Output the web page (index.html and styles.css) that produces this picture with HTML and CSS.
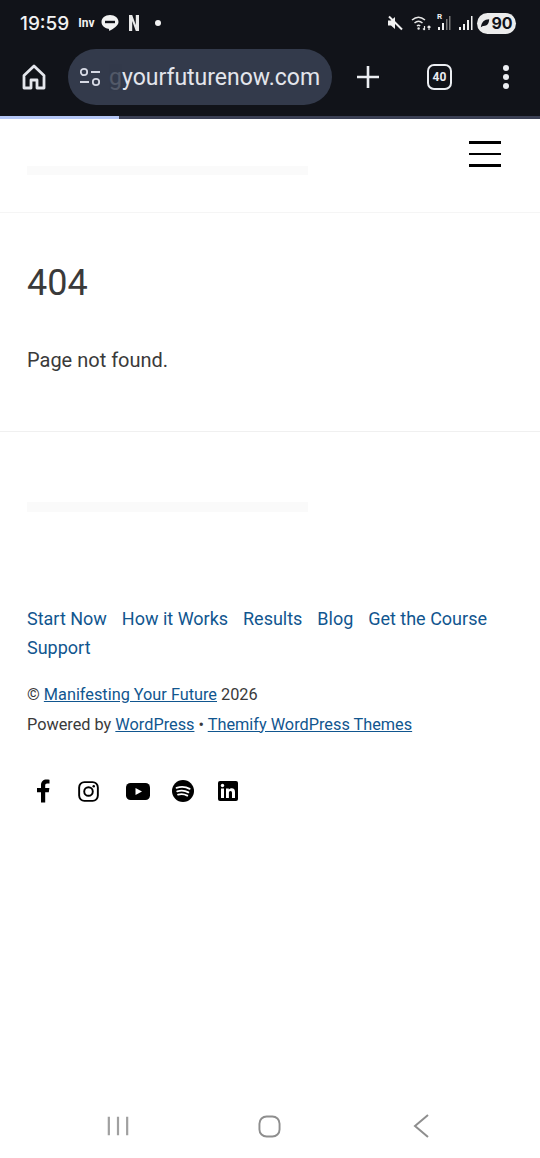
FILE: index.html
```html
<!DOCTYPE html>
<html lang="en">
<head>
  <meta charset="UTF-8">
  <meta name="viewport" content="width=device-width, initial-scale=1.0">
  <title>Page not found</title>
  <link rel="stylesheet" href="styles.css">
</head>
<body>
  <div class="phone">
    <!-- status bar -->
    <div class="status">
      <div class="status-left">
        <span class="clock">19:59</span>
        <span class="inv">Inv</span>
        <svg class="line-icon" viewBox="0 0 20 19"><path d="M10 1C5 1 1.500 4 1.500 8c0 3.500 3 6.300 7 6.800.6.100.6.500.5 1.200-.1.700.2 1 1 .6 2.500-1.300 8.500-4.800 8.500-8.600C18.500 4 15 1 10 1z" fill="#f2f2f2"/><rect x="5" y="6.800" width="10" height="2.400" fill="#111319"/></svg>
        <svg class="netflix-icon" viewBox="0 0 10 16"><path d="M0 0h3.200l3.600 10V0H10v16H6.800L3.200 6v10H0z" fill="#e8e8e8"/></svg>
        <span class="dot"></span>
      </div>
      <div class="status-right">
        <svg class="mute-icon" viewBox="0 0 16 16"><path d="M1 5.500h3L8 2v12L4 10.500H1z" fill="#f2f2f2"/><path d="M2 1.500l13 13" stroke="#f2f2f2" stroke-width="2"/></svg>
        <svg class="wifi-icon" viewBox="0 0 22 16"><path d="M1 5c4-3.500 9-3.500 13 0M3.500 8c2.500-2.200 5.500-2.200 8 0M6 11c1-.9 2.200-.9 3.200 0" fill="none" stroke="#e8e8e8" stroke-width="1.500"/><circle cx="7.600" cy="13.500" r="1.200" fill="#e8e8e8"/><path d="M13.500 11v4M12 13.500l1.500 1.500M18 15v-4M16.500 12.500L18 11l1.500 1.500" fill="none" stroke="#e8e8e8" stroke-width="1.200"/></svg>
        <span class="signal-r">
          <span class="r-label">R</span>
          <svg class="signal-icon" viewBox="0 0 14 16"><rect x="1" y="12" width="2" height="3" fill="#f0f0f0"/><rect x="5" y="8" width="2" height="7" fill="#f0f0f0"/><rect x="9" y="4" width="1.500" height="11" fill="#777"/><rect x="12" y="1" width="1.500" height="14" fill="#777"/></svg>
        </span>
        <svg class="signal-icon" viewBox="0 0 14 16"><rect x="0" y="12" width="2" height="3" fill="#f0f0f0"/><rect x="4" y="9" width="2" height="6" fill="#f0f0f0"/><rect x="8" y="5" width="2" height="10" fill="#f0f0f0"/><rect x="12" y="1" width="1.500" height="14" fill="#f0f0f0"/></svg>
        <span class="battery">
          <svg class="leaf-icon" viewBox="0 0 12 12"><path d="M1 11C2 5 5 1.500 11 1.500 11 7 8 10 3.500 9.500z" fill="#111319"/></svg>
          <span>90</span>
        </span>
      </div>
    </div>

    <!-- browser toolbar -->
    <div class="toolbar">
      <svg class="home-icon" viewBox="0 0 24 26"><path d="M2 11.500L12 2l10 9.500V24h-7v-8H9v8H2z" fill="none" stroke="#e4e6ec" stroke-width="2.800" stroke-linejoin="round"/></svg>
      <div class="url-pill">
        <svg class="tune-icon" viewBox="0 0 24 20"><circle cx="6" cy="5" r="3.200" fill="none" stroke="#d6d9e4" stroke-width="1.800"/><path d="M13 5h9M2 15h9" stroke="#d6d9e4" stroke-width="1.800"/><circle cx="18" cy="15" r="3.200" fill="none" stroke="#d6d9e4" stroke-width="1.800"/></svg>
        <span class="url-text"><span class="url-fade">g</span>yourfuturenow.com</span>
      </div>
      <svg class="plus-icon" viewBox="0 0 24 24"><path d="M12 1v22M1 12h22" stroke="#eceef2" stroke-width="2.600"/></svg>
      <span class="tab-count">40</span>
      <span class="menu-dots"><i></i><i></i><i></i></span>
    </div>
    <div class="progress"><div class="progress-fill"></div></div>

    <!-- site -->
    <header class="site-header">
      <div class="placeholder"></div>
      <button class="burger"><i></i><i></i><i></i></button>
    </header>

    <main class="content">
      <h1>404</h1>
      <p>Page not found.</p>
    </main>

    <footer class="footer">
      <div class="placeholder footer-placeholder"></div>
      <nav class="footer-nav">
        <a href="#">Start Now</a>
        <a href="#">How it Works</a>
        <a href="#">Results</a>
        <a href="#">Blog</a>
        <a href="#">Get the Course</a>
        <a href="#">Support</a>
      </nav>
      <div class="credits">
        <div>© <a href="#">Manifesting Your Future</a> 2026</div>
        <div>Powered by <a href="#">WordPress</a> • <a href="#">Themify WordPress Themes</a></div>
      </div>
      <div class="socials">
        <svg class="fb" viewBox="0 0 14 24"><path d="M9.200 23.500V13.200h3.600l.6-4.200H9.200V6.500c0-1.200.5-2 2-2h2.300V.8C13 .7 11.800.5 10.500.5 7.300.5 5 2.500 5 6v3H1v4.200h4v10.300z" fill="#000"/></svg>
        <svg class="ig" viewBox="0 0 22 22"><rect x="1.200" y="1.200" width="19.600" height="19.600" rx="5.500" fill="none" stroke="#000" stroke-width="2"/><circle cx="11" cy="11" r="4.500" fill="none" stroke="#000" stroke-width="2"/><circle cx="16.500" cy="5.500" r="1.300" fill="#000"/></svg>
        <svg class="yt" viewBox="0 0 24 17"><rect width="24" height="17" rx="4.500" fill="#000"/><path d="M9.500 5l6.500 3.500-6.500 3.500z" fill="#fff"/></svg>
        <svg class="sp" viewBox="0 0 22 22"><circle cx="11" cy="11" r="11" fill="#000"/><path d="M4.500 7.800c4.500-1.300 9.500-1 13.200 1.100M5.200 11.300c3.800-1 8-.7 11.200 1.100M6 14.600c3.200-.8 6.500-.5 9.300 1" fill="none" stroke="#fff" stroke-width="1.800" stroke-linecap="round"/></svg>
        <svg class="in" viewBox="0 0 20 20"><rect width="20" height="20" rx="2" fill="#000"/><rect x="3" y="7.500" width="3" height="9.500" fill="#fff"/><circle cx="4.500" cy="4.500" r="1.700" fill="#fff"/><path d="M8 7.500h2.800v1.300c.6-1 1.600-1.500 2.900-1.500 2.400 0 3.300 1.500 3.300 4V17h-3v-5c0-1.300-.4-2.100-1.500-2.100-1.200 0-1.600.9-1.600 2.100v5H8z" fill="#fff"/></svg>
      </div>
    </footer>

    <!-- android nav -->
    <div class="android-nav">
      <svg class="nav-recent" viewBox="0 0 24 22"><path d="M2 1v20M12 1v20M22 1v20" stroke="#a0a0a0" stroke-width="2.400"/></svg>
      <svg class="nav-home" viewBox="0 0 24 24"><rect x="1.500" y="1.500" width="21" height="21" rx="7.500" fill="none" stroke="#8e8e8e" stroke-width="2"/></svg>
      <svg class="nav-back" viewBox="0 0 16 24"><path d="M15 1L2 12l13 11" fill="none" stroke="#8e8e8e" stroke-width="2"/></svg>
    </div>
  </div>
</body>
</html>
```

FILE: styles.css
```css
* {
  box-sizing: border-box;
}
body {
  margin: 0;
  font-family: Roboto, "Liberation Sans", sans-serif;
  background-color: #ffffff;
  color: #3a3a3a;
}
a {
  color: #11568f;
}
.phone {
  display: flex;
  flex-direction: column;
  height: 1158px;
  overflow: hidden;
}

/* status bar */
.status {
  display: flex;
  justify-content: space-between;
  align-items: center;
  height: 46px;
  padding: 0 24px 0 20px;
  background-color: #111319;
  color: #f2f2f2;
}
.status-left, .status-right {
  display: flex;
  align-items: center;
}
.clock {
  font-family: Inter, Roboto, sans-serif;
  font-size: 19px;
  font-weight: 500;
}
.inv {
  margin-left: 9px;
  font-size: 12px;
  font-weight: 700;
}
.line-icon {
  width: 20px;
  height: 19px;
  margin-left: 5px;
}
.netflix-icon {
  width: 10px;
  height: 16px;
  margin-left: 9px;
}
.dot {
  width: 6px;
  height: 6px;
  margin-left: 16px;
  border-radius: 50%;
  background-color: #f2f2f2;
}
.mute-icon {
  width: 16px;
  height: 16px;
}
.wifi-icon {
  width: 22px;
  height: 16px;
  margin-left: 8px;
}
.signal-r {
  position: relative;
  display: flex;
  margin-left: 4px;
}
.r-label {
  position: absolute;
  top: -3px;
  left: 0;
  font-size: 8px;
  font-weight: 700;
}
.signal-icon {
  width: 14px;
  height: 16px;
}
.status-right > .signal-icon {
  margin-left: 8px;
}
.battery {
  display: flex;
  align-items: center;
  justify-content: center;
  gap: 1px;
  width: 39px;
  height: 21px;
  margin-left: 4px;
  border-radius: 11px;
  background-color: #ececec;
  color: #111319;
  font-family: Inter, Roboto, sans-serif;
  font-size: 16px;
  font-weight: 700;
}
.leaf-icon {
  width: 10px;
  height: 10px;
}

/* toolbar */
.toolbar {
  display: flex;
  align-items: center;
  height: 70px;
  padding: 0 0 8px 22px;
  background-color: #111319;
}
.home-icon {
  flex: none;
  width: 24px;
  height: 26px;
}
.url-pill {
  display: flex;
  align-items: center;
  width: 264px;
  height: 56px;
  margin-left: 22px;
  padding-left: 10px;
  border-radius: 28px;
  background-color: #333a4b;
  overflow: hidden;
}
.tune-icon {
  flex: none;
  width: 24px;
  height: 20px;
}
.url-text {
  margin-left: 7px;
  color: #e3e5ec;
  font-size: 23px;
  white-space: nowrap;
}
.url-fade {
  opacity: 0.18;
}
.plus-icon {
  flex: none;
  width: 24px;
  height: 24px;
  margin-left: 24px;
}
.tab-count {
  display: flex;
  flex: none;
  align-items: center;
  justify-content: center;
  width: 25px;
  height: 26px;
  margin-left: 47px;
  border: 2.500px solid #eceef2;
  border-radius: 7px;
  color: #eceef2;
  font-size: 12px;
  font-weight: 700;
}
.menu-dots {
  display: flex;
  flex: none;
  flex-direction: column;
  gap: 3px;
  margin-left: 51px;
}
.menu-dots i {
  width: 6px;
  height: 6px;
  border-radius: 50%;
  background-color: #eceef2;
}
.progress {
  height: 3px;
  background-color: #3b4054;
}
.progress-fill {
  width: 119px;
  height: 100%;
  background-color: #b4c6f5;
}

/* site header */
.site-header {
  position: relative;
  height: 94px;
  padding: 47px 0 0 27px;
  border-bottom: 1px solid #f5f5f5;
}
.placeholder {
  width: 281px;
  height: 9px;
  background-color: #fafafa;
}
.burger {
  position: absolute;
  top: 22px;
  right: 39px;
  display: flex;
  flex-direction: column;
  gap: 9px;
  padding: 0;
  border: none;
  background: none;
}
.burger i {
  width: 32px;
  height: 2.500px;
  background-color: #000000;
}

/* content */
.content {
  height: 219px;
  padding: 47px 27px 0;
  border-bottom: 1px solid #f0f0f0;
}
.content h1 {
  margin: 0;
  font-size: 36px;
  font-weight: 400;
  line-height: 46px;
}
.content p {
  margin: 39px 0 0;
  font-size: 20px;
  line-height: 30px;
}

/* footer */
.footer {
  padding: 70px 27px 0;
}
.footer-placeholder {
  height: 10px;
}
.footer-nav {
  display: flex;
  flex-wrap: wrap;
  column-gap: 14.900px;
  margin-top: 92px;
  font-size: 18px;
  line-height: 29px;
}
.footer-nav a {
  text-decoration: none;
}
.credits {
  margin-top: 18px;
  font-size: 16.300px;
  line-height: 29.500px;
}
.socials {
  display: flex;
  align-items: center;
  margin-top: 40px;
}
.fb {
  width: 14px;
  height: 24px;
  margin-left: 9px;
}
.ig {
  width: 21px;
  height: 21px;
  margin-left: 28px;
}
.yt {
  width: 24px;
  height: 17px;
  margin-left: 27px;
}
.sp {
  width: 22px;
  height: 22px;
  margin-left: 22px;
}
.in {
  width: 20px;
  height: 20px;
  margin-left: 24px;
}

/* android nav */
.android-nav {
  display: flex;
  align-items: center;
  justify-content: center;
  gap: 129px;
  height: 64px;
  margin-top: auto;
  padding-right: 4px;
}
.nav-recent {
  width: 22px;
  height: 22px;
}
.nav-home {
  width: 23px;
  height: 23px;
}
.nav-back {
  width: 16px;
  height: 24px;
  margin-left: 3px;
}
```
